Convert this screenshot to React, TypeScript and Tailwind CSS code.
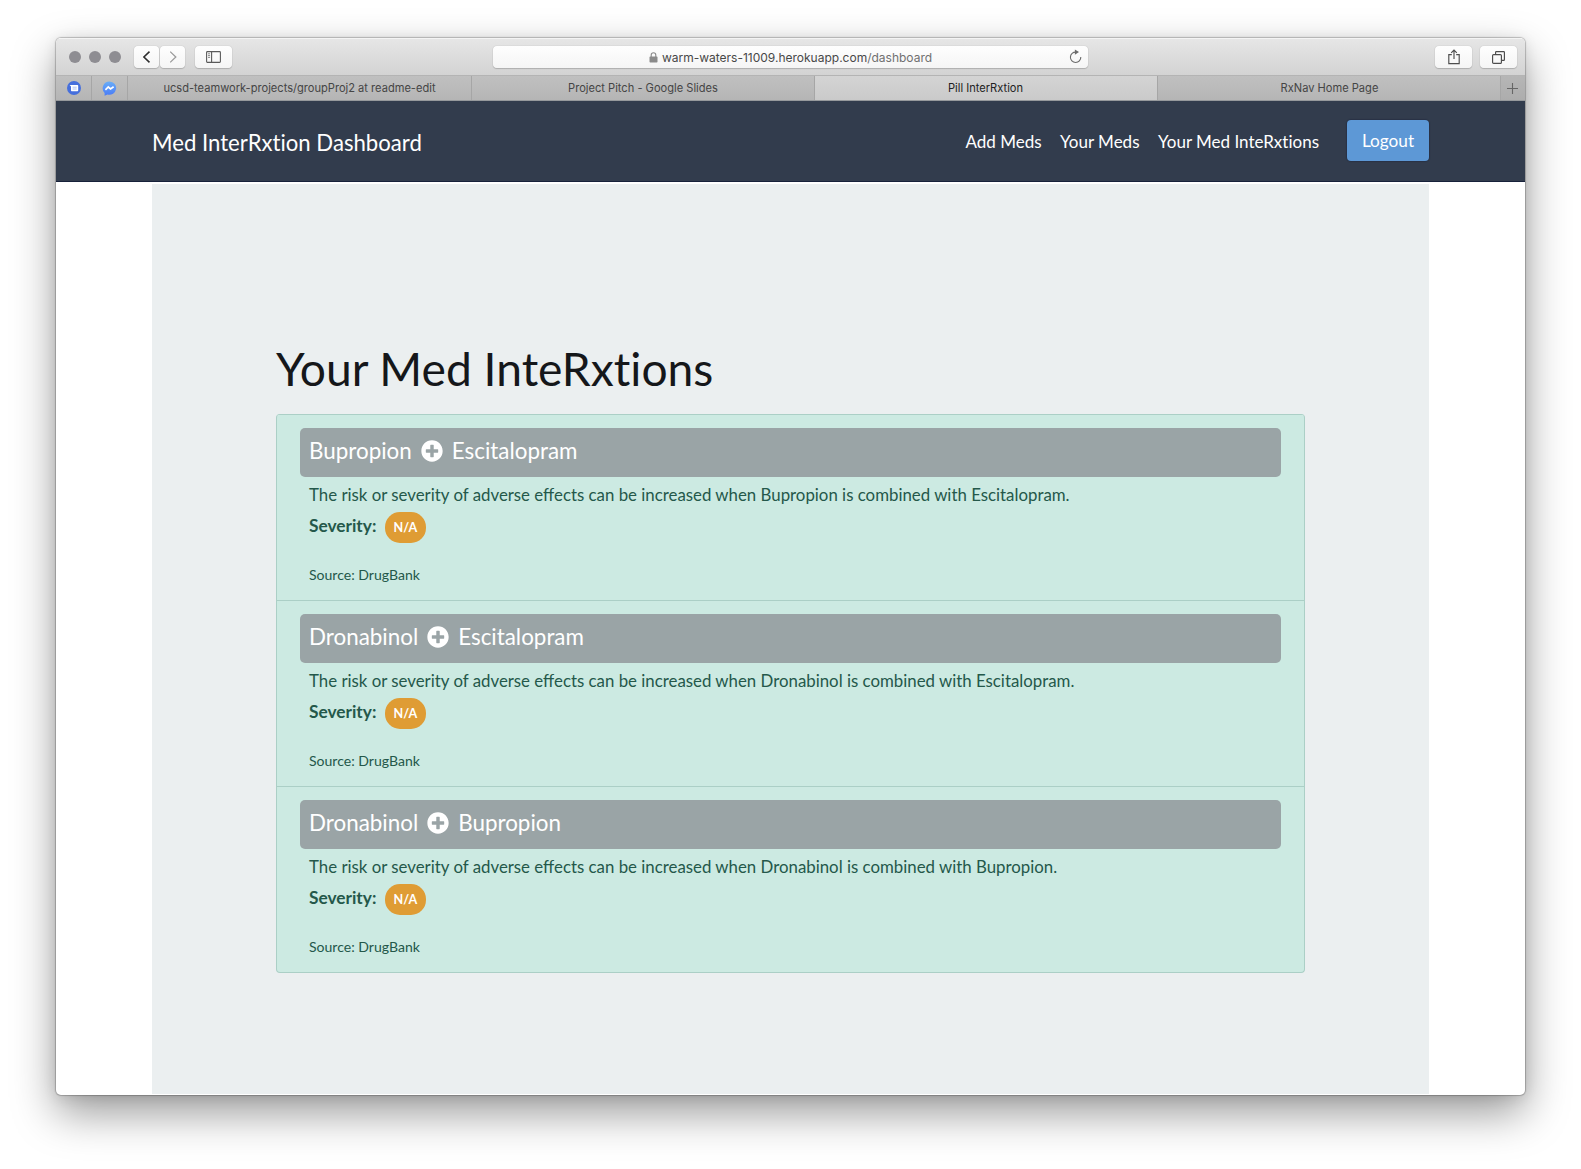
import React from "react";
import { FaPlusCircle } from "react-icons/fa";

type Interaction = { first: string; second: string };

const interactions: Interaction[] = [
  { first: "Bupropion", second: "Escitalopram" },
  { first: "Dronabinol", second: "Escitalopram" },
  { first: "Dronabinol", second: "Bupropion" },
];

const toolButton =
  "flex h-[22px] items-center justify-center rounded-[4px] bg-gradient-to-b from-[#fefefe] to-[#f5f5f5] shadow-[0_0_1px_rgba(0,0,0,0.3),0_1px_1px_rgba(0,0,0,0.16)]";

function Toolbar() {
  return (
    <div className="flex h-[37px] items-center border-t border-[#f4f4f4] bg-gradient-to-b from-[#e6e6e6] to-[#d3d3d3] pr-2 pl-[13px]">
      <div className="flex gap-2">
        <span className="size-3 rounded-full bg-[#8e8d92]" />
        <span className="size-3 rounded-full bg-[#8e8d92]" />
        <span className="size-3 rounded-full bg-[#8e8d92]" />
      </div>
      <div className="ml-[13px] flex gap-px">
        <span className={`${toolButton} w-[25px]`}>
          <svg width="8" height="12" viewBox="0 0 8 12" fill="none" stroke="#2d2d2d" strokeWidth="1.5">
            <path d="M6.5 .6 .9 6l5.6 5.4" />
          </svg>
        </span>
        <span className={`${toolButton} w-[25px]`}>
          <svg width="8" height="12" viewBox="0 0 8 12" fill="none" stroke="#9b9b9b" strokeWidth="1.3">
            <path d="M1.2 .6 6.8 6l-5.6 5.4" />
          </svg>
        </span>
      </div>
      <span className={`${toolButton} ml-[10px] w-[37px]`}>
        <svg width="15" height="12" viewBox="0 0 15 12" fill="none" stroke="#5a5a5a" strokeWidth="1.1">
          <rect x=".6" y=".6" width="13.8" height="10.8" rx=".8" />
          <path d="M5.6 .6v10.8" />
          <path d="M2 2.8h2.1M2 4.6h2.1M2 6.4h2.1" strokeWidth=".7" />
        </svg>
      </span>
      <div className={`${toolButton} relative ml-[261px] w-[595px] font-[Inter] text-[12px] text-[#484848]`}>
        <svg className="mr-1" width="9" height="11" viewBox="0 0 9 11">
          <rect x=".5" y="4.6" width="8" height="6" rx=".8" fill="#8b8b8b" />
          <path d="M2.2 5V3a2.3 2.3 0 0 1 4.6 0v2" fill="none" stroke="#8b8b8b" strokeWidth="1.1" />
        </svg>
        <span className="pt-[2px] leading-[22px]">
          warm-waters-11009.herokuapp.com<span className="text-[#707070]">/dashboard</span>
        </span>
        <svg className="absolute top-[3px] right-[6px]" width="13" height="15" viewBox="0 0 13 15" fill="none" stroke="#6b6b6b" strokeWidth="1.1">
          <path d="M7 3.1A5.2 5.2 0 1 0 11.8 8" />
          <path d="M5.9 .5 10 3.1 5.9 5.7z" fill="#6b6b6b" stroke="none" />
        </svg>
      </div>
      <span className={`${toolButton} ml-auto w-[37px]`}>
        <svg width="12" height="16" viewBox="0 0 12 16" fill="none" stroke="#4d4d4d" strokeWidth="1.15">
          <path d="M3.8 5.6H.8v9h10.4v-9H8.2" />
          <path d="M6 10V1.2M3.2 3.8 6 1l2.8 2.8" />
        </svg>
      </span>
      <span className={`${toolButton} ml-2 w-[37px]`}>
        <svg width="13" height="13" viewBox="0 0 13 13" fill="none" stroke="#4d4d4d" strokeWidth="1.15">
          <rect x=".6" y="3.6" width="8.8" height="8.8" rx="1" />
          <path d="M3.6 3.4V1.3c0-.4.3-.7.7-.7h7.4c.4 0 .7.3.7.7v7.4c0 .4-.3.7-.7.7H9.6" />
        </svg>
      </span>
    </div>
  );
}

function TabBar() {
  const idle =
    "flex items-center justify-center border-r border-[#a6a6a6] bg-gradient-to-b from-[#c0c0c0] to-[#b5b5b5]";
  return (
    <div className="flex h-[26px] border-t border-b border-t-[#b4b4b4] border-b-[#96999c] font-[Inter] text-[11.1px] text-[#454545]">
      <div className={`${idle} w-9`}>
        <svg width="14" height="14" viewBox="0 0 14 14">
          <circle cx="7" cy="7" r="7" fill="#466fdc" />
          <path d="M2.6 4h7.6c.6 0 1 .4 1 1v4.2c0 .6-.4 1-1 1H5c-.6 0-1-.4-1-1V5.6z" fill="#fff" />
          <path d="M5.5 6.2h4.2M5.5 8h4.2" stroke="#a9bdf2" strokeWidth=".9" />
        </svg>
      </div>
      <div className={`${idle} w-9`}>
        <svg width="15" height="15" viewBox="0 0 15 15">
          <defs>
            <linearGradient id="chat" x1="0" y1="0" x2="0" y2="1">
              <stop offset="0" stopColor="#69aef8" />
              <stop offset="1" stopColor="#4a7bf6" />
            </linearGradient>
          </defs>
          <path d="M7.5.4a7 6.7 0 1 1-2 13.2L2.6 14.7v-2.8A6.8 6.8 0 0 1 7.5.4z" fill="url(#chat)" />
          <path d="M3.4 8.9 6.3 6l2.3 1.9L11.6 5.7" fill="none" stroke="#fff" strokeWidth="1.7" />
        </svg>
      </div>
      <div className={`${idle} w-[344px]`}>ucsd-teamwork-projects/groupProj2 at readme-edit</div>
      <div className={`${idle} w-[343px]`}>Project Pitch - Google Slides</div>
      <div className="flex w-[343px] items-center justify-center border-r border-[#a6a6a6] bg-gradient-to-b from-[#d4d4d4] to-[#cacaca] pr-px text-[#222]">
        Pill InterRxtion
      </div>
      <div className={`${idle} w-[343px] pl-px`}>RxNav Home Page</div>
      <div className="flex flex-1 items-center justify-center bg-gradient-to-b from-[#b6b6b6] to-[#adadad] pr-[2px]">
        <svg width="11" height="11" viewBox="0 0 11 11" stroke="#666" strokeWidth="1.1">
          <path d="M5.5 0v11M0 5.5h11" />
        </svg>
      </div>
    </div>
  );
}

function Header() {
  return (
    <header className="flex h-[81px] items-center border-b border-[#17213a] bg-[#323c4d] pr-24 pl-24 text-white">
      <h2 className="pt-[3px] text-[22.15px]">Med InterRxtion Dashboard</h2>
      <nav className="ml-auto flex items-center gap-[18.5px] pt-[2px] text-[17px]">
        <a>Add Meds</a>
        <a>Your Meds</a>
        <a>Your Med InteRxtions</a>
      </nav>
      <button className="mb-px ml-7 flex h-[41px] w-[82px] items-center justify-center rounded-[4px] bg-[#5d98d6] text-[17.2px] shadow-[0_0_1px_1px_rgba(25,35,60,0.4)]">
        Logout
      </button>
    </header>
  );
}

function InteractionItem({ first, second }: Interaction) {
  return (
    <li className="flex h-[186px] flex-col border-t border-[#abcfc6] px-[23px] pt-[13px] text-[#24584a]">
      <div className="flex h-[49px] shrink-0 items-center rounded-[5px] bg-[#9aa4a6] pb-[3px] pl-[9px] text-[22.4px] text-white">
        {first}
        <FaPlusCircle className="mr-[9px] ml-[9px] size-[22px]" />
        {second}
      </div>
      <p className="h-[35px] pl-[9px] text-[16.84px] leading-[35px] [font-variant-ligatures:normal]">
        The risk or severity of adverse effects can be increased when {first} is combined with {second}.
      </p>
      <div className="flex h-[31px] pl-[9px]">
        <strong className="text-[17.3px] leading-[28px] font-bold">Severity:</strong>
        <span className="ml-[8.5px] flex h-[31px] w-[41px] items-center justify-center rounded-[15px] bg-[#df9c34] pt-px text-[12.6px] font-bold text-white">
          N/A
        </span>
      </div>
      <small className="mt-5 pl-[9px] text-[14.05px] leading-[23px]">Source: DrugBank</small>
    </li>
  );
}

export default function App() {
  return (
    <div className="h-[1169px] w-[1581px] overflow-hidden bg-white pt-[38px] pl-[56px] font-['Lato',sans-serif] [font-variant-ligatures:none]">
      <div className="flex h-[1057px] w-[1469px] flex-col overflow-hidden rounded-[5px] bg-white shadow-[0_0_1px_1px_rgba(0,0,0,0.22),0_18px_44px_rgba(0,0,0,0.4),0_2px_14px_rgba(0,0,0,0.1)]">
        <Toolbar />
        <TabBar />
        <Header />
        <main className="mt-[2px] mb-px ml-24 w-[1277px] flex-1 bg-[#ebeff0] px-[124px] pt-[151px]">
          <h1 className="text-[46.2px] leading-[66px] text-[#15171a]">Your Med InteRxtions</h1>
          <ul className="mt-[13px] w-[1029px] overflow-hidden rounded-[4px] border border-t-0 border-[#abcfc6] bg-[#cceae2]">
            {interactions.map((item) => (
              <InteractionItem key={item.first + item.second} {...item} />
            ))}
          </ul>
        </main>
      </div>
    </div>
  );
}
